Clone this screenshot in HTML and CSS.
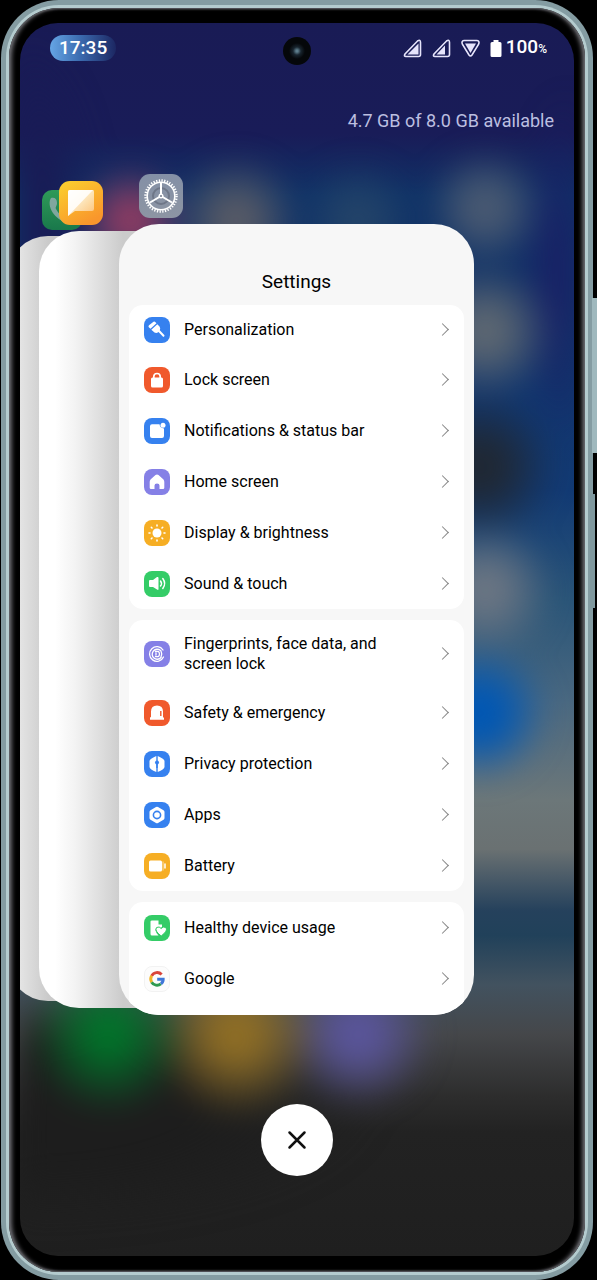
FILE: index.html
```html
<!DOCTYPE html>
<html lang="en">
<head>
    <meta charset="UTF-8">
    <meta name="viewport" content="width=device-width, initial-scale=1.0">
    <title>Recent apps</title>
    <link rel="stylesheet" href="styles.css">
</head>
<body>

    <div class="phone">
        <div class="side-key volume"></div>
        <div class="side-key power"></div>
        <div class="rim">
            <div class="bezel">
                <main class="screen">

                    <div class="wallpaper"></div>
                    <div class="camera"></div>

                    <header class="status-bar">
                        <span class="clock">17:35</span>
                        <div class="status-icons">
                            <svg width="19" height="19" viewBox="0 0 19 19"><path d="M14.5 2Q17.5 0 17.5 3.500V15.500Q17.500 17.500 15.500 17.500H3Q0.500 17.500 2 15Z" fill="none" stroke="#e6e4fb" stroke-width="1.6"/><path d="M15.500 4.500V15.500H4.500Z" fill="#e6e4fb"/></svg>
                            <svg width="19" height="19" viewBox="0 0 19 19"><path d="M14.5 2Q17.5 0 17.5 3.500V15.500Q17.500 17.500 15.500 17.500H3Q0.500 17.500 2 15Z" fill="none" stroke="#e6e4fb" stroke-width="1.6"/><path d="M13 6.500V15.500H4.500Z" fill="#e6e4fb"/></svg>
                            <svg width="19" height="19" viewBox="0 0 19 19"><path d="M3 1.500H16Q19 2 17.500 5.500L11 16Q9.500 18 8 16L1.500 5.500Q0 2 3 1.500Z" fill="none" stroke="#e6e4fb" stroke-width="1.600"/><path d="M4 4.500H15L9.500 14Z" fill="#e6e4fb"/></svg>
                            <svg class="battery" width="12" height="19" viewBox="0 0 12 19"><path d="M3.500 1H8.500V3H10Q11.500 3 11.500 4.500V16.500Q11.500 18 10 18H2Q0.500 18 0.500 16.500V4.500Q0.500 3 2 3H3.500Z" fill="#fff"/></svg>
                            <span class="charge">100<small>%</small></span>
                        </div>
                    </header>

                    <p class="memory">4.7 GB of 8.0 GB available</p>

                    <section class="recents">
                        <div class="task task-phone">
                            <svg class="app-icon" width="40" height="40" viewBox="0 0 40 40">
                                <defs><linearGradient id="green" x2="0" y2="1"><stop offset="0" stop-color="#2f9a58"/><stop offset="1" stop-color="#19784b"/></linearGradient></defs>
                                <rect width="40" height="40" rx="10" fill="url(#green)"/>
                                <path d="M9 8C13 7 15 9 15 13C15 16 13 17 14 19C16 23 19 26 23 28L29 27C32 28 32 31 31 33C20 35 5 22 8 10Z" fill="#7fa79e"/>
                            </svg>
                            <div class="card"></div>
                        </div>

                        <div class="task task-messages">
                            <svg class="app-icon" width="44" height="44" viewBox="0 0 44 44">
                                <defs>
                                    <linearGradient id="amber" x2="0.600" y2="1"><stop offset="0" stop-color="#fbd22f"/><stop offset="1" stop-color="#f9962c"/></linearGradient>
                                    <linearGradient id="fold" x2="1" y2="1"><stop offset="0" stop-color="#fff"/><stop offset="1" stop-color="#fff" stop-opacity="0.350"/></linearGradient>
                                </defs>
                                <rect width="44" height="44" rx="11" fill="url(#amber)"/>
                                <path d="M11 9H34Q35 9 35 11V28Q35 30 33 30H16L9 35V11Q9 9 11 9Z" fill="url(#fold)"/>
                                <path d="M11 9H34L9 35V11Q9 9 11 9Z" fill="#fff" fill-opacity="0.850"/>
                            </svg>
                            <div class="card"></div>
                        </div>

                        <div class="task task-settings">
                            <svg class="app-icon" width="44" height="44" viewBox="0 0 44 44">
                                <defs><linearGradient id="steel" x2="0" y2="1"><stop offset="0" stop-color="#8490a6"/><stop offset="1" stop-color="#8d95a3"/></linearGradient></defs>
                                <rect width="44" height="44" rx="11" fill="url(#steel)"/>
                                <g fill="none" stroke="#fff">
                                    <circle cx="22" cy="22" r="15.500" stroke-width="2.500" stroke-dasharray="1.300 1.405"/>
                                    <circle cx="22" cy="22" r="13.800" stroke-width="1.600"/>
                                    <circle cx="22" cy="22" r="8" stroke="#6f7788" stroke-width="2"/>
                                    <path d="M22 9V22L11 28.500M22 22L33 28.500" stroke-width="2"/>
                                </g>
                                <circle cx="22" cy="22" r="2.500" fill="#fff"/>
                                <circle cx="22" cy="22" r="1" fill="#727a8b"/>
                            </svg>

                            <div class="card">
                                <h1>Settings</h1>

                                <ul class="group">
                                    <li><a href="#personalization">
                                        <svg class="icon blue" viewBox="0 0 26 26"><path d="M4.800 10.200Q4 9 5 8.200L9.500 4.800Q10.500 4.200 11.500 5.200L12.500 6.300L6.500 11.800ZM7.300 12.700L13.300 7.200L15.500 9.500Q16.800 11.300 15.800 13.300L20.500 18.200Q20.800 19.500 19.300 20L14.500 15Q12.500 16.500 10.500 15.500Z" fill="#fff"/></svg>
                                        <span>Personalization</span>
                                    </a></li>
                                    <li><a href="#lock-screen">
                                        <svg class="icon orange" viewBox="0 0 26 26"><path d="M9.800 12V9.500Q9.800 6.500 13 6.500T16.200 9.500V12" fill="none" stroke="#fff" stroke-width="1.700"/><rect x="7" y="10.500" width="12" height="10" rx="1.500" fill="#fff"/></svg>
                                        <span>Lock screen</span>
                                    </a></li>
                                    <li><a href="#notifications">
                                        <svg class="icon blue" viewBox="0 0 26 26"><path d="M8 6.200H15.500Q16 10 20 10.500V18Q20 20 18 20H8Q6 20 6 18V8.200Q6 6.200 8 6.200Z" fill="#fff"/><circle cx="19" cy="7.300" r="2.500" fill="#fff"/></svg>
                                        <span>Notifications &amp; status bar</span>
                                    </a></li>
                                    <li><a href="#home-screen">
                                        <svg class="icon purple" viewBox="0 0 26 26"><path d="M11.500 6Q13 4.800 14.500 6L19.500 10.500Q20.300 11.500 20.300 13V18.800Q20.300 20 19 20H15.500V16.500Q15.500 14.500 13 14.500T10.500 16.500V20H7Q5.700 20 5.700 18.800V13Q5.700 11.500 6.500 10.500Z" fill="#fff"/></svg>
                                        <span>Home screen</span>
                                    </a></li>
                                    <li><a href="#display">
                                        <svg class="icon yellow" viewBox="0 0 26 26"><circle cx="13" cy="13" r="4.500" fill="#fff"/><g stroke="#fff" stroke-width="1.600" stroke-linecap="round"><path d="M13 5V6M13 20V21M5 13H6M20 13H21M7.300 7.300L8 8M18 18L18.700 18.700M18.700 7.300L18 8M8 18L7.300 18.700"/></g></svg>
                                        <span>Display &amp; brightness</span>
                                    </a></li>
                                    <li><a href="#sound">
                                        <svg class="icon green" viewBox="0 0 26 26"><path d="M6 9H9L13 6Q14.500 5.500 14.500 7V18Q14.500 19.500 13 18.500L9 16H6Q5 16 5 15V10Q5 9 6 9Z" fill="#fff"/><path d="M16.500 10Q18.500 12.500 16.500 15M18.800 7.500Q22.500 12.500 18.800 17.500" fill="none" stroke="#fff" stroke-width="1.500" stroke-linecap="round"/></svg>
                                        <span>Sound &amp; touch</span>
                                    </a></li>
                                </ul>

                                <ul class="group">
                                    <li><a class="tall" href="#fingerprints">
                                        <svg class="icon purple" viewBox="0 0 26 26"><g fill="none" stroke="#fff" stroke-width="1.300" stroke-linecap="round"><path d="M19 9A7.300 7.300 0 1 0 19.500 16M17 16.500A5 5 0 1 1 16.500 9.500M11.500 10.500Q15.500 9.500 15.500 13T11.500 15.500"/><path d="M12 12V14M17 10Q18.500 13 17 16"/></g></svg>
                                        <span>Fingerprints, face data, and screen lock</span>
                                    </a></li>
                                    <li><a href="#safety">
                                        <svg class="icon orange" viewBox="0 0 26 26"><path d="M7 17V11.500Q7 5.500 13 5.500T19 11.500V17.500H20V19.800H6V17.500Z" fill="#fff"/><path d="M16.800 11V16" stroke="#f0582c" stroke-width="1.400"/></svg>
                                        <span>Safety &amp; emergency</span>
                                    </a></li>
                                    <li><a href="#privacy">
                                        <svg class="icon blue" viewBox="0 0 26 26"><path d="M12.300 5V21Q5.800 18.500 5.500 16V10Q5.500 8 12.300 5ZM13.700 5Q20.500 8 20.500 10V16Q20.200 18.500 13.700 21Z" fill="#fff"/><circle cx="13" cy="11.500" r="2" fill="#3681ef"/><path d="M13 11V17" stroke="#3681ef" stroke-width="1.500"/></svg>
                                        <span>Privacy protection</span>
                                    </a></li>
                                    <li><a href="#apps">
                                        <svg class="icon blue" viewBox="0 0 26 26"><path d="M12 5Q13 4.500 14 5L19.500 8.300Q20.500 9 20.500 10V16Q20.500 17 19.500 17.700L14 21Q13 21.500 12 21L6.500 17.700Q5.500 17 5.500 16V10Q5.500 9 6.500 8.300Z" fill="#fff"/><circle cx="13" cy="13" r="3.600" fill="none" stroke="#3681ef" stroke-width="1.600"/></svg>
                                        <span>Apps</span>
                                    </a></li>
                                    <li><a href="#battery">
                                        <svg class="icon yellow" viewBox="0 0 26 26"><rect x="5" y="7.500" width="13" height="11" rx="1.500" fill="#fff"/><path d="M19 8.500V17.500" stroke="#fff" stroke-opacity="0.600"/><path d="M21 11V15" stroke="#fff" stroke-width="1.500" stroke-linecap="round"/></svg>
                                        <span>Battery</span>
                                    </a></li>
                                </ul>

                                <ul class="group last">
                                    <li><a href="#health">
                                        <svg class="icon green" viewBox="0 0 26 26"><path d="M8 5.500H14.500V9.500H18V12L16.500 13Q11.500 11 11.500 15.500Q12 18 14.500 20.500H8Q6.500 20.500 6.500 19V6.500Q6.500 5.500 8 5.500Z" fill="#fff"/><path d="M17.200 13.500Q19 11 21.800 12.500Q24.500 15.500 17.200 21Q10 15.500 12.600 12.500Q15.400 11 17.200 13.500Z" fill="#fff" stroke="#34cc67"/></svg>
                                        <span>Healthy device usage</span>
                                    </a></li>
                                    <li><a href="#google">
                                        <svg class="icon google" viewBox="0 0 26 26"><g fill="none" stroke-width="3.200"><path d="M18 8.200A6.700 6.700 0 0 0 7.200 9.600" stroke="#d9453b"/><path d="M7.200 9.600A6.700 6.700 0 0 0 7.200 16.400" stroke="#f0b429"/><path d="M7.200 16.400A6.700 6.700 0 0 0 17.200 18.200" stroke="#2f9a50"/><path d="M17.200 18.200Q19.800 16.500 19.700 13.300H13.200" stroke="#3f77d8"/></g></svg>
                                        <span>Google</span>
                                    </a></li>
                                </ul>
                            </div>
                        </div>
                    </section>

                    <button class="clear-all" type="button" aria-label="Close all apps">
                        <svg width="20" height="20" viewBox="0 0 20 20"><path d="M2.500 2.500L17.500 17.500M17.500 2.500L2.500 17.500" stroke="#111" stroke-width="2.500" stroke-linecap="round"/></svg>
                    </button>

                </main>
            </div>
        </div>
    </div>

</body>
</html>
```
FILE: styles.css
```css
* {
    box-sizing: border-box;
}

body {
    margin: 0;
    background: #000;
    font-family: Roboto, "Noto Sans", sans-serif;
}

h1, p, ul {
    margin: 0;
    padding: 0;
}

/* Phone body */
.phone {
    position: relative;
    display: flex;
    min-height: 100vh;
    margin: 0 4px 0 1px;
    padding: 5px;
    border-radius: 58px;
    background: #849ca2;
}

.rim {
    flex: 1;
    display: flex;
    padding: 3px;
    border-radius: 53px;
    background: #b4cbce;
}

.bezel {
    flex: 1;
    display: flex;
    padding: 15px 11px 16px;
    border-radius: 50px;
    background: #000;
    box-shadow: inset 4px 0 4px -1px #66666b, inset -4px 0 4px -1px #66666b, inset 0 0 2px 1px #55555a;
}

.side-key {
    position: absolute;
    right: -4px;
    width: 5px;
    background: #9fb8bd;
}

.volume {
    top: 298px;
    height: 155px;
}

.power {
    top: 494px;
    height: 114px;
    right: -2px;
    background: #7f989e;
}

.screen {
    position: relative;
    flex: 1;
    display: flex;
    flex-direction: column;
    overflow: hidden;
    border-radius: 38px;
    background: linear-gradient(#191b55 0%, #191c58 9%, #0f3267 14%, #103268 22%, #123a74 38%,
        #2a5578 47%, #4a6880 55%, #6c7779 63%, #6a7172 67%, #25415c 72%, #21415a 74%,
        #42525f 78%, #45474a 82%, #2d2d2d 87%, #222 90%, #1f1f1f 100%);
}

/* blurred home screen icons behind the cards */
.wallpaper {
    position: absolute;
    inset: 0;
    filter: blur(14px);
    background:
        radial-gradient(circle at 16% 82%, #00752a 12px, transparent 80px),
        radial-gradient(circle at 39% 82%, #8f6e25 18px, transparent 84px),
        radial-gradient(circle at 61% 82%, #5a559c 15px, transparent 76px),
        radial-gradient(ellipse 360px 120px at 0% 88%, #1d1d1d 50%, transparent),
        radial-gradient(circle at 83% 56%, #0057b4 20px, transparent 70px),
        radial-gradient(circle at 84% 46%, #6c7683 16px, transparent 70px),
        radial-gradient(circle at 83% 36%, #202833 20px, transparent 76px),
        radial-gradient(circle at 84% 25%, #5e6872 16px, transparent 70px),
        radial-gradient(circle at 84% 15%, #4a5a72 16px, transparent 60px),
        radial-gradient(circle at 20% 16%, #903c62 14px, transparent 56px),
        radial-gradient(circle at 39% 16%, #5a5c66 14px, transparent 66px),
        radial-gradient(circle at 61% 16%, #254569 10px, transparent 60px),
        radial-gradient(ellipse 60px 180px at 100% 20%, #1a1f66 20%, transparent),
        radial-gradient(ellipse 80px 180px at 0% 16%, #191b55 40%, transparent);
}

.camera {
    position: absolute;
    top: 14px;
    left: calc(50% - 14px);
    width: 28px;
    height: 28px;
    border-radius: 50%;
    background: radial-gradient(circle, #5d7d8c 1px, #18242e 4px, #05070a 8px);
}

/* Status bar */
.status-bar {
    position: relative;
    display: flex;
    justify-content: space-between;
    align-items: center;
    height: 50px;
    padding: 0 27px 0 30px;
    color: #fff;
}

.clock {
    width: 66px;
    padding-left: 9px;
    border-radius: 13px;
    background: linear-gradient(90deg, #65a5e5, #3c6cb0 45%, #1c2762);
    font-size: 19px;
    font-weight: 500;
    line-height: 26px;
}

.status-icons {
    display: flex;
    align-items: center;
    gap: 10px;
}

.charge {
    margin-left: -6px;
    font-size: 19px;
    font-weight: 500;
    line-height: 26px;
}

.charge small {
    font-size: 12px;
}

.memory {
    position: relative;
    margin-top: 36px;
    padding-right: 20px;
    color: #bcbfe0;
    font-size: 18px;
    line-height: 24px;
    text-align: right;
}

/* Recent apps */
.recents {
    position: relative;
    margin-top: 41px;
}

.task {
    display: flex;
    flex-direction: column;
    gap: 6px;
}

.app-icon {
    position: relative;
    z-index: 1;
    flex: none;
    margin-left: 20px;
}

.card {
    flex: 1;
    overflow: hidden;
    border-radius: 40px;
    background: #f7f7f7;
}

.task-settings {
    position: relative;
    margin: 0 100px 0 99px;
}

/* the two older apps peek out from under the current one */
.task-messages,
.task-phone {
    position: absolute;
    width: 355px;
}

.task-messages {
    top: 7px;
    bottom: 7px;
    left: 19px;
}

.task-messages .card {
    background: linear-gradient(90deg, #fff 16px, #f3f3f3 36px, #dadada 66px, #cbcbcb 84px);
}

.task-phone {
    top: 16px;
    bottom: 14px;
    left: -12px;
}

.task-phone .app-icon {
    margin-left: 34px;
}

.task-phone .card {
    background: linear-gradient(90deg, #e4e4e4 12px, #cacaca 40px);
}

h1 {
    padding: 46px 0 11px;
    font-size: 19px;
    font-weight: 400;
    line-height: 24px;
    text-align: center;
}

.group {
    margin: 0 10px 11px;
    border-radius: 14px;
    background: #fff;
    list-style: none;
}

.group.last {
    margin-bottom: 0;
    padding-bottom: 11px;
    border-radius: 14px 14px 0 0;
}

.group a {
    display: flex;
    align-items: center;
    gap: 14px;
    min-height: 51px;
    padding: 0 17px 0 15px;
    color: #000;
    font-size: 16px;
    line-height: 20px;
    text-decoration: none;
}

.group:first-of-type li:first-child a {
    min-height: 49px;
}

.group a.tall {
    min-height: 67px;
}

.group a span {
    flex: 1;
    max-width: 220px;
}

/* chevron */
.group a::after {
    content: "";
    width: 8px;
    height: 8px;
    margin-left: auto;
    border: solid #858585;
    border-width: 1px 1px 0 0;
    transform: rotate(45deg);
}

.icon {
    flex: none;
    width: 26px;
    height: 26px;
    border-radius: 8px;
}

.blue {
    background: #3681ef;
}

.orange {
    background: #f0592c;
}

.purple {
    background: #8580e6;
}

.yellow {
    background: #f6ae24;
}

.green {
    background: #34cc67;
}

.google {
    background: #fcfcfc;
    border: 1px solid #f2f2f2;
}

.clear-all {
    position: relative;
    display: flex;
    align-items: center;
    justify-content: center;
    align-self: center;
    width: 72px;
    height: 72px;
    margin: 89px 0 79px;
    padding: 0;
    border: none;
    border-radius: 50%;
    background: #fff;
    cursor: pointer;
}
```
